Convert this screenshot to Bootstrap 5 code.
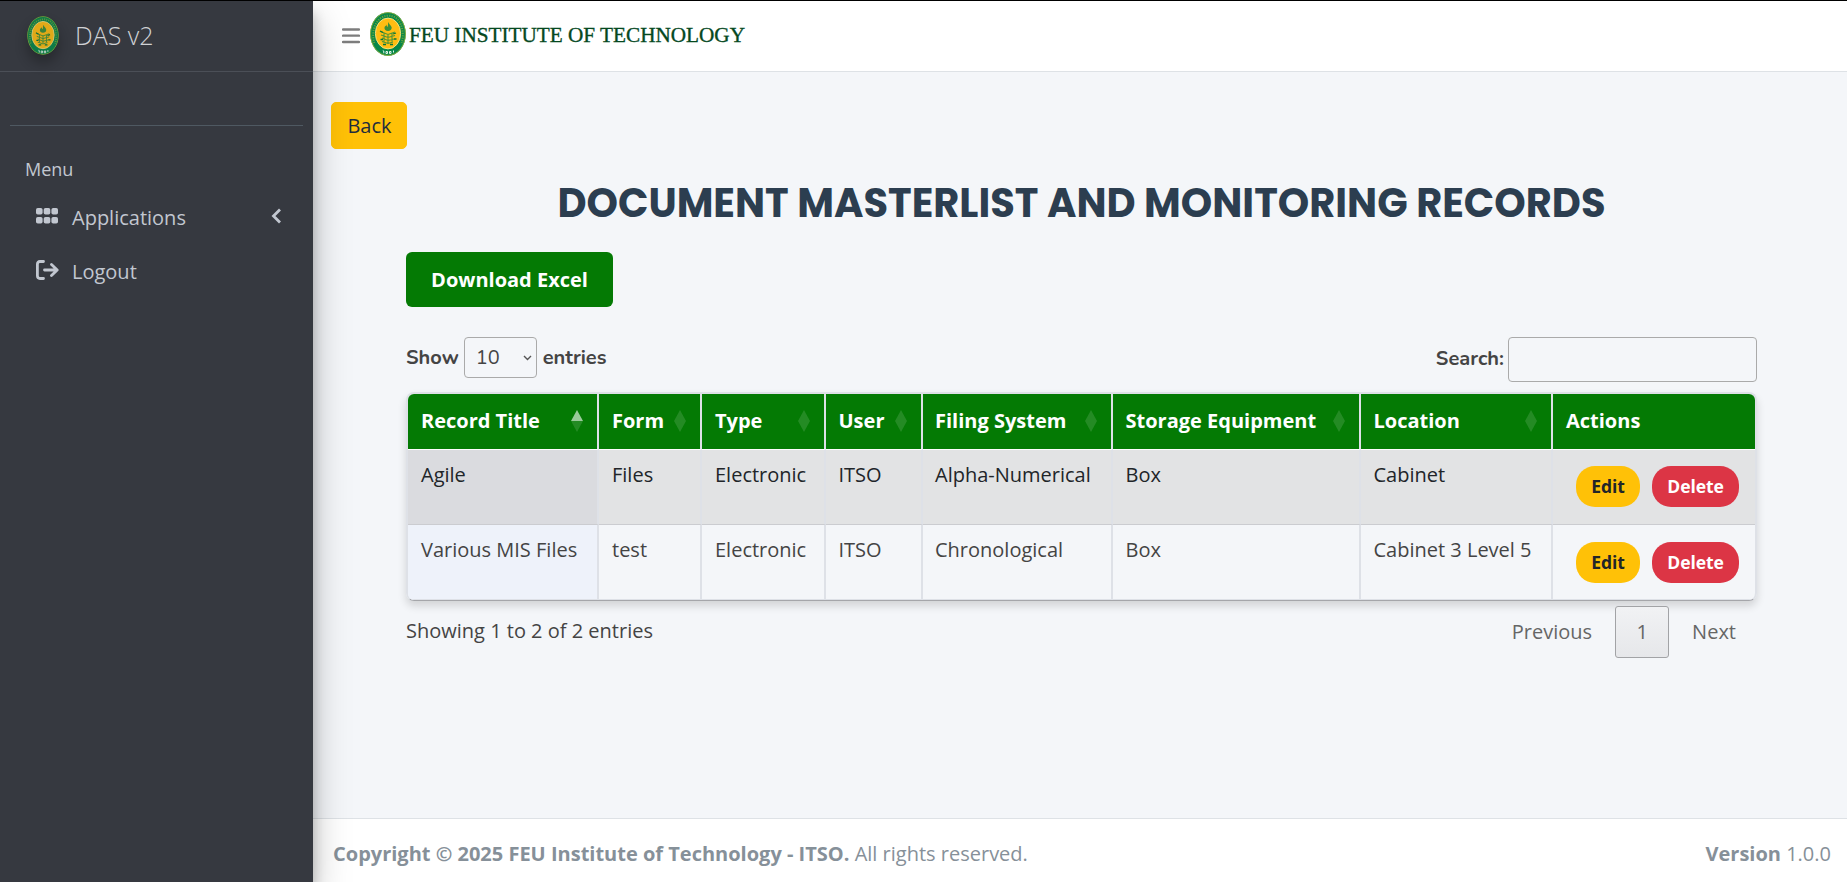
<!DOCTYPE html>
<html lang="en">
<head>
<meta charset="utf-8">
<meta name="viewport" content="width=device-width, initial-scale=1">
<title>DAS v2</title>
<link rel="stylesheet" href="https://cdn.jsdelivr.net/npm/bootstrap@5.3.0/dist/css/bootstrap.min.css">
<style>
body{font-family:"Open Sans",sans-serif;font-size:20px;line-height:30px;color:#444;background:#f4f6f9;height:100vh;overflow:hidden}
.app{height:100vh;border-top:1px solid #000}
.side{width:313px;background:#363940;color:#c2c7d0;box-shadow:0 17px 35px rgba(0,0,0,.25),0 12px 12px rgba(0,0,0,.22);z-index:2}
.brand{height:71px;padding:0 27px 2px;border-bottom:1px solid #4b4f57;font-size:25px;font-weight:300;color:#d0d2d5;gap:16px}
.brand svg{border-radius:50%;filter:drop-shadow(0 8px 7px rgba(0,0,0,.35))}
.userline{height:54px;margin:0 10px;border-bottom:1px solid #4f5962}
.menuhead{font-size:18px;line-height:27px;padding:30px 25px 8px}
.side .nav-link{color:#c2c7d0;height:54px;padding:0 32px 0 36px}
.side .nav-link span{margin-left:14px}
.side .nav-link span.out{margin-left:13px}
.topbar{height:71px;background:#fff;border-bottom:1px solid #dee2e6;padding-left:29px}
.mark-seal{margin:0 0 5px 10px}
.wordmark{font-family:"Liberation Serif",serif;font-size:21.5px;fill:#05491f;stroke:#05491f;stroke-width:.35px}
.backrow{padding:30px 0 0 18px}
.backbtn{--bs-btn-bg:#ffc107;width:76px;height:47px;font-size:20px;line-height:30px;padding:8px 0 7px 1px;border-radius:5px;border:1px solid #ffc107;color:#1f2d3d}
.records{margin:0 90px 0 93px}
.pagetitle{font-family:Poppins,Inter,sans-serif;font-weight:700;font-size:40px;line-height:48px;color:#2c3e50;margin:30px 0 25px;white-space:nowrap}
.excel{background:#047a04;color:#fff;font-weight:700;font-size:20px;line-height:30px;padding:13px 25px 12px;border-radius:6px;border:0;width:207px;height:55px;white-space:nowrap}
.controls{height:45px;margin-top:30px}
.controls .lbl{font-family:Nunito,"Open Sans",sans-serif;font-weight:700;font-size:20px}
.lenbox{width:73px;height:41px;border:1px solid #aaa;border-radius:4px;padding:0 3px 0 11px;margin:0 6px 0 5px;font-weight:400}
.findlabel{padding-bottom:2px}
.findbox{width:249px;height:45px;border:1px solid #aaa;border-radius:4px;background:transparent;margin-left:4px}
.gridbox{margin-top:10px;width:1351px;border-radius:8px;overflow:hidden;border:2px solid #dee1e7;border-bottom:1px solid #a5a6aa;box-shadow:0 5px 8px rgba(0,0,0,.14)}
.records table{table-layout:fixed;width:1347px;border-collapse:separate;border-spacing:0}
.records th{background:#047a04;color:#fff;font-weight:700;height:56px;padding:0 14px 2px 13px;border-right:2px solid #dee1e7;border-bottom:1px solid #fff;white-space:nowrap}
.records td{vertical-align:top;height:75px;padding:10px 12px 10px 13px;border-right:2px solid #dee1e7;white-space:nowrap}
.records tr>:nth-child(n+4):nth-child(-n+7){padding-left:12.5px}
.records tr>:nth-child(5){padding-left:12px!important}
.records tr>:last-child{border-right:0}
.odd td{background:#e2e3e4;color:#212529;border-bottom:1px solid #cbccd0}
.odd td:first-child{background:#dadbdf}
.even td{border-bottom:1px solid #dee1e7}
.even td:first-child{background:#eef2fa}
.records td:last-child{padding:16px 16px 0 23px}
.records .even td:last-child{padding-top:17px}
.pillbtn{font-size:17.5px;line-height:26px;font-weight:700;height:41px;padding:0 0 1px;border-radius:19px;border:0;letter-spacing:-.1px}
.pillbtn.edit{width:64px;background:#ffc107;color:#212529}
.pillbtn.del{width:87px;background:#dc3545;color:#fff}
.pagerrow{margin-top:5px;width:1351px}
.entryinfo{padding-bottom:2px}
.pager{color:#666;padding-right:21px}
.pagenum{width:54px;height:52px;border:1px solid #a2a3a6;border-radius:3px;background:linear-gradient(#f1f2f4,#e6e7ea);margin:0 23px}
.foot{height:64px;background:#fff;border-top:1px solid #dee2e6;color:#869099;padding:6px 16px 0 20px}
</style>
</head>
<body>
<svg width="0" height="0" class="d-none">
  <symbol id="seal" viewBox="0 0 36 44">
    <ellipse cx="18" cy="22" rx="17.8" ry="21.8" fill="#07874a"/>
    <ellipse cx="18" cy="22" rx="17.4" ry="21.4" fill="none" stroke="#9cae32" stroke-width=".8"/>
    <path d="M4.300 31C1 20 5 4.500 18 3.700S35 20 31.700 31" fill="none" stroke="#a9b534" stroke-width="2" stroke-dasharray="1.200 1.200" opacity=".6"/>
    <ellipse cx="18" cy="21.500" rx="12.600" ry="15.400" fill="#ffbd12" stroke="#f3df7d" stroke-width="1"/>
    <path d="M12.800 38.700l1 .3v2.300M16 41.500v-2h1.500v2zM19.500 41.500v-2H21v2zM23.500 40.500v-2" fill="none" stroke="#e6f4e8" stroke-width="1"/>
    <path d="M18.500 10c.5 2.500 3 3.500 3.200 5.500 0 2-1.500 3.500-3.700 3.500s-3.800-1.500-3.500-3.500c.3-1.500 1.700-1.500 2-3 .2 1 .2 2 1 2.500.8-1.500.2-3 1-5z" fill="#3d9038"/>
    <path d="M10.500 19.500l7.500 3 7-2.500M11 23l7 2.500 7-2M12 26l6 2.500 6-1.500M12 29.500l6 2 5-1.500M14 21v9M18 22v9M22 21.500v8" fill="none" stroke="#4f9535" stroke-width="1.100"/>
    <path d="M10 19l3 1.500M23 22l3-1M10.500 27.500h2.500M24 27h2.500M13 32.500h3M20 32.500h3" stroke="#07753b" stroke-width="1.300"/>
  </symbol>
</svg>
<div class="app d-flex">
  <aside class="side d-flex flex-column flex-shrink-0 position-relative">
    <div class="brand d-flex align-items-center flex-shrink-0">
      <svg width="32" height="39" opacity=".85"><use href="#seal"/></svg><span>DAS v2</span>
    </div>
    <div class="userline"></div>
    <div class="menuhead">Menu</div>
    <nav class="nav flex-column">
      <a class="nav-link d-flex align-items-center" href="#">
        <svg width="22" height="16" viewBox="0 0 22 16" fill="currentColor" class="mb-1"><rect width="6.600" height="6.500" rx="1.800"/><rect x="7.700" width="6.600" height="6.500" rx="1.800"/><rect x="15.400" width="6.600" height="6.500" rx="1.800"/><rect y="9" width="6.600" height="6.500" rx="1.800"/><rect x="7.700" y="9" width="6.600" height="6.500" rx="1.800"/><rect x="15.400" y="9" width="6.600" height="6.500" rx="1.800"/></svg>
        <span>Applications</span>
        <svg class="ms-auto mb-1" width="10" height="16" viewBox="0 0 10 16" fill="none" stroke="currentColor" stroke-width="2.800"><path d="M9 1.500 2.500 8 9 14.500"/></svg>
      </a>
      <a class="nav-link d-flex align-items-center" href="#">
        <svg width="23" height="20" viewBox="0 0 23 20" fill="none" stroke="currentColor" stroke-width="2.800" stroke-linecap="round" stroke-linejoin="round" class="mb-1"><path d="M7.500 1.500H4Q1.400 1.500 1.400 4.200V15.800Q1.400 18.500 4 18.500H7.500M8.500 10H21M15.500 4.500 21.200 10 15.500 15.500"/></svg>
        <span class="out">Logout</span>
      </a>
    </nav>
  </aside>
  <div class="d-flex flex-column flex-grow-1">
    <header class="topbar d-flex align-items-center flex-shrink-0">
      <svg width="18" height="16" viewBox="0 0 18 16" stroke="#7d7d7d" stroke-width="2.300" stroke-linecap="round"><path d="M1 1.500H17M1 7.700H17M1 14H17"/></svg>
      <svg width="36" height="44" class="mark-seal"><use href="#seal"/></svg>
      <svg width="345" height="36"><text class="wordmark" x="3" y="24" textLength="336" lengthAdjust="spacingAndGlyphs">FEU INSTITUTE OF TECHNOLOGY</text></svg>
    </header>
    <main class="flex-grow-1">
      <div class="backrow d-flex"><button class="btn btn-warning backbtn">Back</button></div>
      <section class="records">
        <h1 class="pagetitle text-center">DOCUMENT MASTERLIST AND MONITORING RECORDS</h1>
        <button class="excel btn">Download Excel</button>
        <div class="controls d-flex justify-content-between align-items-start">
          <div class="lbl d-flex align-items-center">Show
            <span class="lenbox d-flex align-items-center justify-content-between">10<svg width="11" height="8" viewBox="0 0 11 8" fill="none" stroke="#555" stroke-width="1.400"><path d="M2 2l3.500 3.500L9 2"/></svg></span>entries</div>
          <label class="lbl d-flex align-items-center"><span class="findlabel">Search:</span><input class="findbox" type="search"></label>
        </div>
        <div class="gridbox">
          <table>
            <colgroup><col style="width:191px"><col style="width:103px"><col style="width:124px"><col style="width:97px"><col style="width:190px"><col style="width:248px"><col style="width:192px"><col></colgroup>
            <thead><tr id="heads"></tr></thead>
            <tbody id="rows"></tbody>
          </table>
        </div>
        <div class="d-flex justify-content-between align-items-center pagerrow">
          <div class="entryinfo">Showing 1 to 2 of 2 entries</div>
          <div class="d-flex align-items-center pager"><span>Previous</span><span class="pagenum d-flex align-items-center justify-content-center">1</span><span>Next</span></div>
        </div>
      </section>
    </main>
    <footer class="foot d-flex align-items-center justify-content-between flex-shrink-0">
      <div><strong>Copyright © 2025 FEU Institute of Technology - ITSO.</strong> All rights reserved.</div>
      <div><b>Version</b> 1.0.0</div>
    </footer>
  </div>
</div>
<script src="https://cdn.jsdelivr.net/npm/bootstrap@5.3.0/dist/js/bootstrap.bundle.min.js"></script>
<script>
const heads=['Record Title','Form','Type','User','Filing System','Storage Equipment','Location','Actions'];
const arrows=up=>`<svg width="12" height="22" viewBox="0 0 12 22" fill="#fff"><path d="M6 0 12 11H0z" opacity="${up}"/><path d="M0 11H12L6 22z" opacity=".13"/></svg>`;
document.getElementById('heads').innerHTML=heads.map((h,i)=>`<th><div class="d-flex align-items-center justify-content-between">${h}${i<7?arrows(i?.13:.6):''}</div></th>`).join('');
const data=[['Agile','Files','Electronic','ITSO','Alpha-Numerical','Box','Cabinet'],['Various MIS Files','test','Electronic','ITSO','Chronological','Box','Cabinet 3 Level 5']];
document.getElementById('rows').innerHTML=data.map((r,i)=>`<tr class="${i?'even':'odd'}">${r.map(c=>`<td>${c}</td>`).join('')}<td><div class="d-flex justify-content-between"><button class="pillbtn edit">Edit</button><button class="pillbtn del">Delete</button></div></td></tr>`).join('');
</script>
</body>
</html>
